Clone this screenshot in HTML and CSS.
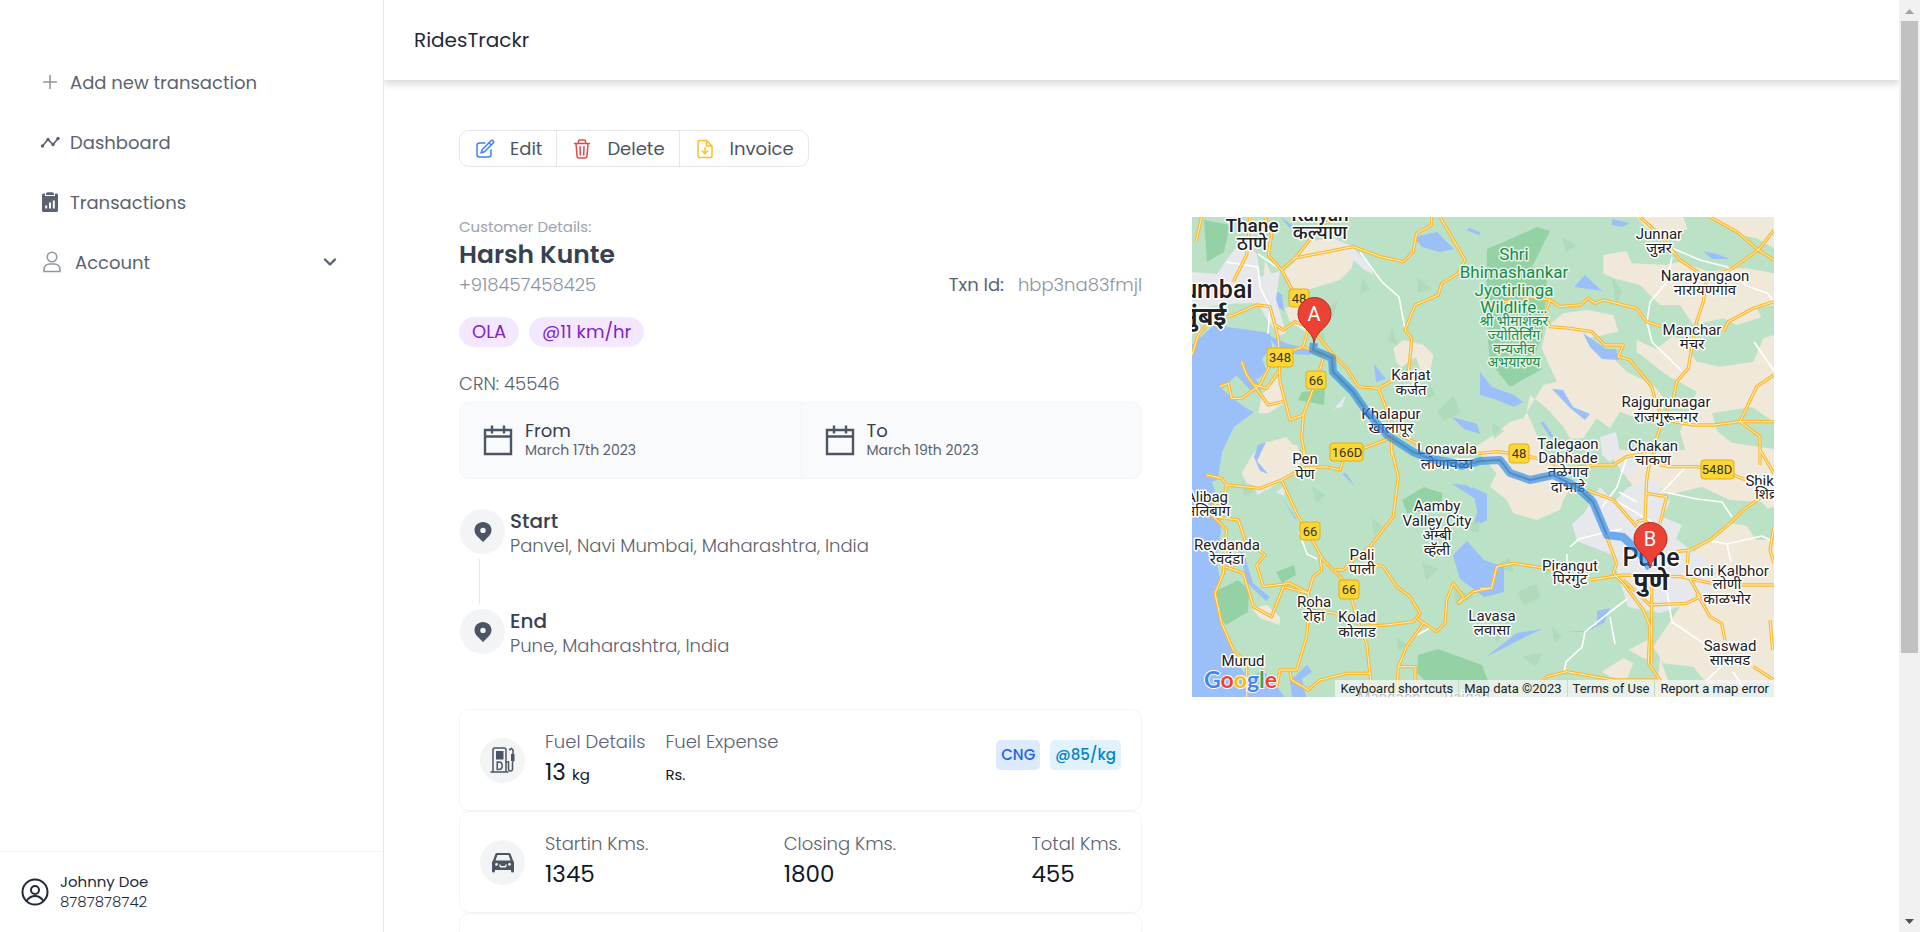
FILE: index.html
```html
<!DOCTYPE html>
<html lang="en">
<head>
<meta charset="utf-8">
<title>RidesTrackr</title>
<link rel="stylesheet" href="styles.css">
</head>
<body>
<div class="app">
  <aside class="sidebar">
    <nav class="nav">
      <a class="nav-item" href="#add"><svg class="nav-icon" viewBox="0 0 20 20"><path class="thin" d="M10 3v14M3 10h14"/></svg>Add new transaction</a>
      <a class="nav-item" href="#dashboard"><svg class="nav-icon" viewBox="0 0 20 20"><path d="M2.500 14 8 7.500l5 5 5-6" fill="none" stroke="currentColor" stroke-width="1.600"/><g fill="currentColor"><circle cx="2.500" cy="14" r="1.700"/><circle cx="8" cy="7.500" r="1.700"/><circle cx="13" cy="12.500" r="1.700"/><circle cx="18" cy="6.500" r="1.700"/></g></svg>Dashboard</a>
      <a class="nav-item" href="#transactions"><svg class="nav-icon" viewBox="0 0 20 20"><path fill="currentColor" d="M3.500 1.500H5V4h10V1.500h1.500q1.500 0 1.500 1.500v15.500q0 1.500-1.500 1.500h-13Q2 20 2 18.500V3q0-1.500 1.500-1.500zM6 2q0-1.800 1.800-1.800h4.400Q14 .2 14 2v1H6z"/><path d="M6.200 16.500v-3M10 16.500v-6M13.800 16.500v-8" fill="none" stroke="#fff" stroke-width="2"/></svg>Transactions</a>
      <button class="nav-item nav-account" type="button"><svg class="nav-icon account-icon" viewBox="0 0 20 24"><circle class="thin" cx="10" cy="7" r="4.700"/><path class="thin" d="M2 21.500v-1.700Q2 14 8 14h4q6 0 6 5.800v1.700z"/></svg>Account<svg class="chevron" viewBox="0 0 14 14"><path d="m2 4.500 5 5 5-5" fill="none" stroke="currentColor" stroke-width="2.400" stroke-linecap="round" stroke-linejoin="round"/></svg></button>
    </nav>
    <div class="user">
      <svg class="avatar" viewBox="0 0 28 28" fill="none" stroke="currentColor" stroke-width="2"><circle cx="14" cy="14" r="12.500"/><circle cx="14" cy="12" r="4"/><path d="M5.500 23q3.500-5 8.500-5t8.500 5"/></svg>
      <div><div class="user-name">Johnny Doe</div><div class="user-phone">8787878742</div></div>
    </div>
  </aside>

  <div class="page">
    <header class="topbar">RidesTrackr</header>
    <main class="content">
      <div class="actions">
        <button type="button"><svg class="blue" viewBox="0 0 20 20"><path d="M10 4H4.500Q2 4 2 6.500v9Q2 18 4.500 18h9q2.500 0 2.500-2.500V11M16 1.800q1-1 2.100.1t.1 2.100L9.500 12.700 6 14l1.300-3.500zM14 3.800 16.200 6"/></svg>Edit</button>
        <button type="button"><svg class="red" viewBox="0 0 20 20"><path d="M2.500 4.500h15M6.500 4.500V2.300Q6.500 1 8 1h4q1.500 0 1.500 1.300v2.200M4 4.500l1 12.500q.2 2 2 2h6q1.800 0 2-2l1-12.500M8 7.500l.3 8.500M12 7.500l-.3 8.500"/></svg>Delete</button>
        <button type="button"><svg class="amber" viewBox="0 0 20 20"><path d="M11.500 1.500H5Q3 1.500 3 3.500v13q0 2 2 2h10q2 0 2-2V7l-5.500-5.500V7H17M10 8.500v6M7.300 12l2.700 2.700 2.700-2.700"/></svg>Invoice</button>
      </div>

      <div class="columns">
        <section class="details">
          <p class="eyebrow">Customer Details:</p>
          <h1>Harsh Kunte</h1>
          <div class="contact"><span>+918457458425</span><span class="txn"><b>Txn Id:</b>hbp3na83fmjl</span></div>
          <div class="chips"><span>OLA</span><span>@11 km/hr</span></div>
          <p class="crn">CRN: 45546</p>
          <div class="dates">
            <div class="date"><svg viewBox="0 0 30 32"><path d="M2 6h26v24H2zM2 12.500h26M9 1.500v8M21 1.500v8"/></svg><div><div class="date-title">From</div><div class="date-value">March 17th 2023</div></div></div>
            <div class="date"><svg viewBox="0 0 30 32"><path d="M2 6h26v24H2zM2 12.500h26M9 1.500v8M21 1.500v8"/></svg><div><div class="date-title">To</div><div class="date-value">March 19th 2023</div></div></div>
          </div>

          <div class="trip">
            <div class="stop"><span class="round"><svg class="pin" viewBox="0 0 20 22"><path fill-rule="evenodd" d="M10 1C5.200 1 1.500 4.600 1.500 9.200c0 3 1.800 5.200 4 7.300L10 21l4.500-4.500c2.200-2.100 4-4.300 4-7.300C18.500 4.600 14.800 1 10 1zm0 5.700a2.700 2.700 0 1 1 0 5.400 2.700 2.700 0 0 1 0-5.400z"/></svg></span><div><h2>Start</h2><p>Panvel, Navi Mumbai, Maharashtra, India</p></div></div>
            <div class="connector"></div>
            <div class="stop"><span class="round"><svg class="pin" viewBox="0 0 20 22"><path fill-rule="evenodd" d="M10 1C5.200 1 1.500 4.600 1.500 9.200c0 3 1.800 5.200 4 7.300L10 21l4.500-4.500c2.200-2.100 4-4.300 4-7.300C18.500 4.600 14.800 1 10 1zm0 5.700a2.700 2.700 0 1 1 0 5.400 2.700 2.700 0 0 1 0-5.400z"/></svg></span><div><h2>End</h2><p>Pune, Maharashtra, India</p></div></div>
          </div>

          <div class="card">
            <span class="round"><svg class="pump" viewBox="0 0 28 28"><path d="M4 26V4q0-2 2-2h9q2 0 2 2v22M1.500 26h18M20 4l2.500-1.500L24 4v12M17 16h2.500v7q0 2 2 2t2-2v-7" fill="none" stroke="currentColor" stroke-width="1.500"/><path d="M7 5h7.500v8.500H7zM22 8h3.500v7H22z" fill="currentColor"/><path d="M8.200 16v7.500h1.600q3.400 0 3.400-3.800T9.800 16z" fill="none" stroke="currentColor" stroke-width="1.500"/></svg></span>
            <div class="metric"><span>Fuel Details</span><strong>13 <small>kg</small></strong></div>
            <div class="metric"><span>Fuel Expense</span><strong><small>Rs.</small></strong></div>
            <div class="tags"><span class="tag-blue">CNG</span><span class="tag-sky">@85/kg</span></div>
          </div>
          <div class="card">
            <span class="round"><svg class="car" viewBox="0 0 24 24"><path fill="currentColor" fill-rule="evenodd" d="M6 3h12q1.300 0 1.700 1.200L22 10.500l1 1.500v9q0 1.500-1.500 1.500T20 21v-1H4v1q0 1.500-1.500 1.500T1 21v-9l1-1.500 2.300-6.300Q4.700 3 6 3zm.5 2L4.500 10.500h15L17.500 5zM5.500 13a1.400 1.400 0 1 0 0 2.800 1.400 1.400 0 0 0 0-2.800zm13 0a1.400 1.400 0 1 0 0 2.800 1.400 1.400 0 0 0 0-2.800zM8 14.500l1 3h6l1-3h-1.500L14 16h-4l-.5-1.500z"/></svg></span>
            <div class="readings">
              <div class="metric"><span>Startin Kms.</span><strong>1345</strong></div>
              <div class="metric"><span>Closing Kms.</span><strong>1800</strong></div>
              <div class="metric"><span>Total Kms.</span><strong>455</strong></div>
            </div>
          </div>
          <div class="card"></div>
        </section>

        <section class="map" aria-label="Route map">
          <svg class="map-art" viewBox="0 0 582 480" preserveAspectRatio="xMidYMid slice">
            <defs>
              <g id="roads" fill="none" stroke-linejoin="round">
                <g transform="translate(-12 -12) scale(.33333)"><path d="M65 36 48 110M210 36 200 150 160 230M255 36 275 90 265 150 305 195 345 270 395 370 460 450 500 490 535 545 595 550 640 525 685 500 690 460 695 400 675 375 705 300 775 270 785 235 835 205 855 165 780 36M36 450 55 390 90 350 160 330 230 300 270 305 285 360 310 375 345 350 385 365M285 360 295 400 300 530 330 645 370 630M305 195 345 160 385 110 420 60 460 45M340 160 520 125 600 155 670 170 700 140 710 85 755 60 755 36M430 460 415 510 370 630 365 700 375 750M120 545 145 535 155 580 185 580 240 540 270 480M185 470 200 510 265 600 310 590M225 540 260 550 295 500M595 550 615 600 635 690 635 750M300 450 370 425 430 450M370 425 385 370M660 690 720 720M550 730 630 700"/></g>
                <g transform="translate(288 -12) scale(.33333)"><path d="M480 36 540 90 600 165 660 205M690 36 770 80 835 135 882 165M882 75 835 135 750 195 680 215 670 290 650 350 640 400 625 490 590 530 580 580 550 640 530 700 520 760M40 290 130 290 150 275 210 285 240 305 300 300 325 280 345 295 370 285 470 310 500 350 545 365M210 285 195 330 210 365 270 370 335 380 375 420 430 420 415 455 450 465 515 545 530 600 550 640M882 290 820 310 745 350 730 380M555 645 640 660 700 660 780 650 882 650M780 650 830 545 882 510M780 650 840 695 840 780"/></g>
                <g transform="translate(-12 233) scale(.33333)"><path d="M80 75 125 85 140 105 240 115 305 90 370 55 435 50 480 60 490 30M370 0 370 50M305 90 350 190 390 260 430 330 490 390 510 430 535 520 560 580 575 720M140 105 130 150 75 180 100 200 175 210 195 270 255 315 230 345 250 410 330 400 385 430M100 200 140 240 130 370 105 430 125 520 160 600 200 640 200 740M135 350 190 370 220 470 275 500 310 410 385 430 400 380 425 360 420 320M635 0 655 80 640 200 570 290 520 330 490 360 465 360M560 340 610 350 650 410 690 440 720 490 700 515 620 525 540 530M385 430 390 480 470 490M385 500 380 560 350 660 300 660 290 710M330 665 335 690 385 720 420 690 500 670 570 670M710 505 770 545 795 520 800 450 820 400 850 440 835 460 880 425 930 415M730 520 680 590 655 650 650 740M655 650 705 650 705 700"/></g>
                <g transform="translate(288 233) scale(.33333)"><path d="M-120 5 0 10 50 5 130 15 190 30 260 55 350 45 400 45 440 20 500 10M490 35 570 50 650 50 760 75 810 95 850 95M515 0 500 90 495 210M320 120 400 150 470 230M500 130 560 140 540 220M380 260 410 340 400 370 430 400 490 480 510 530 505 640 540 690 540 740M0 415 35 415 50 350 100 340 230 360M330 390 430 375 600 380 720 405 882 405M590 305 630 300 690 270 750 220 790 180 860 130M625 300 620 370 660 440 620 460 510 465 430 390M515 390 515 640M650 430 690 500 725 520 735 570M820 650 882 690M882 230 870 300 882 340M870 510 878 600M180 700 200 680 260 665 400 690 540 690M840 0 882 70M470 215 490 210 520 230"/></g>
              </g>
            </defs>
            <rect width="582" height="480" fill="#bbe2c6"/>
            <g class="beige">
              <g transform="translate(-12 -12) scale(.33333)"><path d="M345 170 380 110 460 100 530 130 515 190 480 225 400 250 340 260 310 200zM640 430 670 405 730 420 760 450 750 500 700 515 650 475zM245 570 300 510 320 590 265 625 235 625zM315 310 350 300 400 350 430 380 400 395 330 350zM240 750 270 710 320 695 360 750zM255 165 275 210 265 280 250 230z"/></g>
              <g transform="translate(288 -12) scale(.33333)"><path d="M470 36H610L625 80 595 110 500 70zM690 36H882V130L830 100 780 90zM370 150 440 138 455 175 560 180 600 170 690 200 760 190 800 190 882 205V300L830 310 850 350 790 370 730 340 640 360 600 300 540 300 480 240 400 220 370 205zM200 365 250 325 320 315 400 330 415 380 370 390 320 400 390 450 440 500 520 540 560 590 530 650 500 650 420 620 390 670 350 640 310 700 270 700 250 665 200 610 150 570 140 620 175 700 200 750H-50L40 690 90 650 130 640 190 540 230 530 185 430zM500 370 600 400 650 470 720 485 820 470 850 400 882 390V750H620L600 680 650 560 560 510 470 440 470 405z"/></g>
              <g transform="translate(-12 233) scale(.33333)"><path d="M185 70 220 10 260-25 350-15 370 30 310 90 260 120 200 100zM215 475 260 465 300 500 300 525 240 505z"/></g>
              <g transform="translate(288 233) scale(.33333)"><path d="M-20-10 80-25 190-10 220 50 280 100 250 150 240 180 170 210 100 190 80 150 30 110 50 70zM380 0H882V170L780 200 830 270 882 270V700L680 700 640 650 550 640 520 590 560 530 600 470 540 420 610 330 700 260 760 200 650 150 570 130 510 100 460 110zM365 665 430 625 460 640 440 690 390 680zM445 600 520 560 500 630zM540 620 580 740H530z"/></g>
            </g>
            <g class="meadow">
              <path d="M425 95 468 92 490 112 464 132 430 116zM520 196 560 190 582 205V232L540 226 525 214zM467 280 510 270 538 283 570 285 582 300V313L530 305 490 295zM480 15 510 10 565 28 545 40 500 34zM545 108 576 98 570 116 550 122z"/>
            </g>
            <g class="park">
              <path d="M12 3 38 8 32 35 15 45zM295 32 323 20 345 10 358 14 350 30 340 50 355 62 353 90 350 120 342 140 350 152 318 170 298 145 294 100zM110 175 133 172 132 188 106 183zM24 374 46 363 57 373 56 395 34 408 24 395zM84 355 102 348 104 358 90 366zM210 283 232 270 250 276 250 292 215 296zM226 438 246 432 290 448 302 480H250L225 456z"/>
            </g>
            <g class="relief">
              <path d="M135 90 146 84 141 100zM170 60 178 72 168 78zM120 115 130 108 134 124zM200 110 206 128 196 124zM210 150 224 140 228 152 214 160zM245 195 262 178 268 196 252 204zM236 165 244 178 234 182zM300 205 312 214 302 222zM225 60 240 72 226 76zM420 60 430 74 424 88zM270 310 290 300 286 316zM230 345 246 352 234 364zM262 370 282 380 264 388zM302 350 318 340 322 356zM325 375 345 366 348 380 332 388zM352 340 366 350 354 358zM180 300 190 310 182 318zM205 420 216 428 206 434zM300 410 312 416 304 426zM330 440 350 436 344 450zM360 410 370 420 362 426zM50 265 62 274 52 280zM120 270 134 278 124 286zM370 20 384 28 374 36z"/>
            </g>
            <g class="sea">
              <path d="M0 128 22 108 50 112 78 116 80 130 70 142 75 154 66 162 48 155 30 172 52 190 62 195 42 210 30 235 26 262 20 265 28 290 29 315 24 340 28 363 22 375 28 400 39 425 44 445 58 463 70 452 93 480H0z"/>
              <path d="M62 128 50 140 70 172 60 175 42 156zM64 60 90 78 92 94 77 85zM76 118 96 127 120 132 118 138 88 136zM88 0 103 10 120 12 104 18zM222 20 245 15 262 32 248 35 230 30zM182 147 194 162 184 165zM260 200 285 207 288 217 272 212zM260 267 274 268 294 280V302L282 306 288 285zM261 338 275 324 292 343 312 350V375L292 380 268 362zM382 70 393 58 399 64 410 74 390 71zM420 2 438 6 430 10 420 8zM511 34 525 37 538 42 520 42zM391 116 414 132 424 132 427 143 410 142 398 130zM360 172 371 173 381 190 398 197 393 203 378 191zM288 155 300 170 322 178 331 185 322 190 302 182 288 178zM280 270 295 277V303L288 307zM45 325 53 340 61 366 78 380 74 384 55 366zM90 280 105 303 102 301zM294 440 325 416 350 412 327 423 310 432zM374 414 390 415 405 408 405 394 418 391 412 406 396 414zM98 464 115 448 120 455 110 462 114 480H100zM62 240 66 228 74 225 65 244 76 257 68 254zM154 256 163 269 150 257z"/>
              <path d="M230 20 248 30M276 12 288 17M350 205 360 220" fill="none" stroke="#9bbff9" stroke-width="3"/>
            </g>
            <g class="urban">
              <path d="M0 55 25 57 38 38 50 24 65 37 68 60 88 54 84 82 94 116 87 119 74 101 66 86 30 87 0 94zM135 17 165 35 177 48 182 58 171 52zM392 296 408 270 422 285 435 271 460 260 478 285 470 300 490 308 484 322 512 342 520 378 468 396 436 390 428 364 420 338 385 324 380 307zM408 220 424 215 428 235 418 245 410 238zM430 238 448 242 440 262 428 254zM84 275 94 268 92 279zM62 271 75 272 66 278zM142 192 154 178 150 190z"/>
            </g>
            <g class="minor">
              <path d="M34 45 66 50 68 70 78 90 76 117M66 37 88 52M168 35 190 65 207 80 213 112M480 31 508 43 535 50 555 69 575 76 582 85M480 40 475 65 458 85 455 105 460 125 490 154M562 125 582 154M107 315 115 337 125 342M378 330 387 322 415 315 430 312M375 337 375 350M435 240 425 270 410 290M426 285 460 305M427 275 445 285M470 275 493 251M472 275 505 282 530 285 540 300M518 324 535 327 570 319 582 325M535 327 539 345M475 375 480 405 510 425 530 445M435 382 418 395 393 415 390 430 374 445 372 455M418 400 423 427M240 410 225 418M535 444 515 463M541 455 555 475"/>
            </g>
            <use href="#roads" class="road-case"/>
            <use href="#roads" class="road-core"/>

            <g class="shields">
              <rect x="97" y="72" width="20" height="18" rx="3"/><rect x="75" y="131" width="26" height="19" rx="3"/><rect x="114" y="154" width="20" height="18" rx="3"/><rect x="138" y="226" width="33" height="18" rx="3"/><rect x="108" y="305" width="20" height="18" rx="3"/><rect x="147" y="363" width="20" height="19" rx="3"/><rect x="317" y="227" width="20" height="19" rx="3"/><rect x="509" y="243" width="33" height="19" rx="3"/>
            </g>
            <g class="shield-text">
              <text x="107" y="86">48</text><text x="88" y="145">348</text><text x="124" y="168">66</text><text x="155" y="240">166D</text><text x="118" y="319">66</text><text x="157" y="377">66</text><text x="327" y="241">48</text><text x="525" y="257">548D</text>
            </g>
            <g class="place">
              <text x="219" y="163">Karjat</text><text x="219" y="178">कर्जत</text>
              <text x="199" y="202">Khalapur</text><text x="199" y="216">खालापूर</text>
              <text x="255" y="237">Lonavala</text><text x="255" y="252">लोणावळा</text>
              <text x="113" y="247">Pen</text><text x="113" y="262">पेण</text>
              <text x="15" y="285">Alibag</text><text x="15" y="299">अलिबाग</text>
              <text x="35" y="333">Revdanda</text><text x="35" y="347">रेवदंडा</text>
              <text x="170" y="343">Pali</text><text x="170" y="357">पाली</text>
              <text x="245" y="294">Aamby</text><text x="245" y="309">Valley City</text><text x="245" y="323">अ‍ॅम्बी</text><text x="245" y="338">व्हॅली</text>
              <text x="122" y="390">Roha</text><text x="122" y="404">रोहा</text>
              <text x="165" y="405">Kolad</text><text x="165" y="420">कोलाड</text>
              <text x="51" y="449">Murud</text>
              <text x="300" y="404">Lavasa</text><text x="300" y="418">लवासा</text>
              <text x="467" y="22">Junnar</text><text x="467" y="36">जुन्नर</text>
              <text x="513" y="64">Narayangaon</text><text x="513" y="78">नारायणगांव</text>
              <text x="500" y="118">Manchar</text><text x="500" y="132">मंचर</text>
              <text x="474" y="190">Rajgurunagar</text><text x="474" y="205">राजगुरूनगर</text>
              <text x="376" y="232">Talegaon</text><text x="376" y="246">Dabhade</text><text x="376" y="260">तळेगाव</text><text x="376" y="275">दाभाडे</text>
              <text x="461" y="234">Chakan</text><text x="461" y="248">चाकण</text>
              <text x="585" y="269">Shikrapur</text><text x="585" y="282">शिक्रापूर</text>
              <text x="378" y="354">Pirangut</text><text x="378" y="367">पिरंगुट</text>
              <text x="535" y="359">Loni Kalbhor</text><text x="535" y="372">लोणी</text><text x="535" y="387">काळभोर</text>
              <text x="538" y="434">Saswad</text><text x="538" y="448">सासवड</text>
              <text x="197" y="485">Mangaon</text><text x="275" y="485">Raigad</text>
            </g>
            <g class="place reserve">
              <text x="322" y="43">Shri</text><text x="322" y="61">Bhimashankar</text><text x="322" y="79">Jyotirlinga</text><text x="322" y="96">Wildlife…</text>
              <g class="reserve-local"><text x="322" y="109">श्री भीमाशंकर</text><text x="322" y="123">ज्योतिर्लिंग</text><text x="322" y="137">वन्यजीव</text><text x="322" y="150">अभयारण्य</text></g>
            </g>
            <g class="place town">
              <text x="60" y="15">Thane</text><text x="60" y="33">ठाणे</text><text x="128" y="4">Kalyan</text><text x="128" y="22">कल्याण</text>
            </g>
            <g class="place city">
              <text x="15" y="81">Mumbai</text><text class="local" x="12" y="108">मुंबई</text><text x="459" y="349">Pune</text><text class="local" x="459" y="373">पुणे</text>
            </g>

            <path class="route" d="M122 126 121 133 140 141 141 155 161 175 175 195 195 218 221 235 239 242 262 246 270 249 288 244 308 243 318 256 338 263 361 258 385 270 401 285 415 318 431 320 448 336 458 351"/>
            <path class="route-core" d="M122 126 121 133 140 141 141 155 161 175 175 195 195 218 221 235 239 242 262 246 270 249 288 244 308 243 318 256 338 263 361 258 385 270 401 285 415 318"/>
            <g class="marker"><path d="M122 126C121 113 106 110 106 97a16 16 0 0 1 33 0C139 110 124 113 122 126z"/><path d="M458 351C457 338 442 335 442 322a16 16 0 0 1 33 0C475 335 460 338 458 351z"/></g>
            <g class="marker-text"><text x="122" y="104">A</text><text x="458" y="329">B</text></g>
            <text class="google" x="12" y="471"><tspan fill="#4285f4">G</tspan><tspan fill="#ea4335">o</tspan><tspan fill="#fbbc04">o</tspan><tspan fill="#4285f4">g</tspan><tspan fill="#34a853">l</tspan><tspan fill="#ea4335">e</tspan></text>
          </svg>
          <div class="attribution"><button type="button">Keyboard shortcuts</button><span>Map data ©2023</span><a href="#terms">Terms of Use</a><a href="#report">Report a map error</a></div>
        </section>
      </div>
    </main>
  </div>

  <div class="scrollbar" aria-hidden="true">
    <svg viewBox="0 0 21 20"><path fill="#a3a3a3" d="M6 14h9l-4.500-5z"/></svg>
    <div class="track"><div class="thumb"></div></div>
    <svg viewBox="0 0 21 20"><path fill="#505050" d="M6 7h9l-4.500 5z"/></svg>
  </div>
</div>
</body>
</html>
```
FILE: styles.css
```css
* { box-sizing: border-box; }
body { margin: 0; background: #fff; color: #5b6270; font: 300 18px/25px Poppins, Inter, "Noto Sans", sans-serif; }
h1, h2, p { margin: 0; }
button { font: inherit; color: inherit; background: none; border: 0; padding: 0; cursor: pointer; }
a { color: inherit; text-decoration: none; }
.app { display: flex; height: 100vh; overflow: hidden; }

.sidebar { width: 20%; flex: none; display: flex; flex-direction: column; justify-content: space-between; border-right: 1px solid #e5e7eb; }
.nav { display: flex; flex-direction: column; gap: 10px; padding: 57px 40px 0; }
.nav-item { display: flex; align-items: center; gap: 10px; height: 50px; font-weight: 400; text-align: left; }
.nav-icon { width: 20px; height: 20px; }
.account-icon { width: 24px; height: 24px; }
.nav-account { gap: 11px; }
.thin { fill: none; stroke: #9096a3; stroke-width: 1.6; }
.chevron { width: 14px; height: 14px; margin-left: auto; margin-right: 6px; }
.user { display: flex; align-items: center; gap: 11px; height: 81px; padding-left: 21px; border-top: 1px solid #f3f4f6; color: #1f2937; font-size: 15px; line-height: 20px; }
.avatar { width: 28px; height: 28px; }
.user-name { font-weight: 400; }

.page { flex: 1; min-width: 0; overflow: hidden; }
.topbar { display: flex; align-items: center; height: 80px; padding-left: 30px; color: #1f2937; font-size: 20px; font-weight: 400; box-shadow: 0 4px 8px rgba(0, 0, 0, .16); }
.content { padding: 50px 125px 0 75px; }
.actions { display: flex; width: fit-content; border: 1px solid #e5e7eb; border-radius: 10px; color: #4b5563; }
.actions button { display: flex; align-items: center; gap: 15px; height: 35px; padding: 0 14px 0 15px; font-weight: 400; }
.actions button + button { border-left: 1px solid #e5e7eb; }
.actions svg { width: 20px; height: 20px; fill: none; stroke: currentColor; stroke-width: 1.5; stroke-linejoin: round; stroke-linecap: round; }
.actions .blue { color: #3b82f6; }
.actions .red { color: #ef4444; }
.actions .amber { color: #fbbf24; }

.columns { display: grid; grid-template-columns: 683fr 582fr; gap: 50px; align-items: start; margin-top: 50px; }
.eyebrow { color: #9ca3af; font-size: 15px; line-height: 20px; font-weight: 400; }
h1 { color: #374151; font-size: 25px; line-height: 36px; font-weight: 600; }
.contact { display: flex; justify-content: space-between; color: #8b93a1; line-height: 24px; }
.txn { display: flex; gap: 14px; }
.txn b { color: #5b6270; font-weight: 400; }
.chips { display: flex; gap: 10px; margin-top: 20px; }
.chips span { padding: 0 13px; border-radius: 15px; background: #f3e8ff; color: #7e22ce; line-height: 30px; font-weight: 400; }
.crn { margin-top: 24px; line-height: 25px; }
.dates { display: grid; grid-template-columns: 1fr 1fr; margin-top: 6px; border: 1px solid #f3f4f6; border-radius: 10px; background: #f9fafb; }
.date { display: flex; align-items: center; gap: 12px; height: 75px; padding: 0 0 2px 23px; }
.date + .date { border-left: 1px solid #f3f4f6; }
.date svg { width: 30px; height: 32px; fill: none; stroke: #4b5563; stroke-width: 2.4; }
.date-title { color: #374151; line-height: 20px; font-weight: 400; }
.date-value { font-size: 14px; line-height: 18px; font-weight: 400; }

.round { display: flex; flex: none; align-items: center; justify-content: center; width: 45px; height: 45px; border-radius: 50%; background: #f3f4f6; color: #4b5563; }
.pin { width: 20px; height: 22px; fill: currentColor; }
.trip { padding: 30px 0 55px 1px; }
.stop { display: flex; gap: 5px; height: 45px; }
h2 { color: #374151; font-size: 20px; line-height: 24px; font-weight: 500; }
.connector { width: 1px; height: 45px; margin: 5px 19px; background: #e5e7eb; }

.card { display: flex; align-items: center; height: 102px; padding: 0 20px; border: 1px solid #f3f4f6; border-radius: 10px; }
.pump { width: 28px; height: 28px; }
.car { width: 24px; height: 24px; }
.metric { display: flex; flex-direction: column; margin: 0 0 3px 20px; }
.metric span { line-height: 30px; }
.metric strong { color: #111827; font-size: 23px; line-height: 30px; font-weight: 400; }
.metric small { font-size: 15px; }
.readings { display: flex; flex: 1; justify-content: space-between; margin-bottom: 3px; }
.tags { display: flex; gap: 10px; margin: 0 0 10px auto; font-size: 15px; line-height: 30px; font-weight: 500; }
.tags span { padding: 0 5px; border-radius: 5px; }
.tag-blue { background: #dbeafe; color: #2563eb; }
.tag-sky { background: #e0f2fe; color: #0284c7; }

.map { position: relative; height: 480px; overflow: hidden; font-family: Roboto, "Noto Sans", "Noto Sans Devanagari", sans-serif; font-weight: 400; }
.map-art { display: block; width: 100%; height: 100%; }
.beige { fill: #f0e9d9; }
.meadow { fill: #bbe2c6; }
.park { fill: #94d2a5; }
.relief { fill: #a9d9b8; opacity: .7; }
.sea { fill: #9bbff9; }
.urban { fill: #e7e8ec; }
.minor { fill: none; stroke: #fff; stroke-width: 1.6; }
.road-case { stroke: #fab933; stroke-width: 10; }
.road-core { stroke: #fff0bd; stroke-width: 3; }
.shields { fill: #fdd835; stroke: #e2ad1c; }
.shield-text { font-size: 13px; text-anchor: middle; fill: #333; }
.place { font-size: 15px; text-anchor: middle; fill: #202124; stroke: #fff; stroke-width: 3; stroke-linejoin: round; paint-order: stroke; }
.place.reserve { font-size: 17px; fill: #188a48; stroke: #e5f5e9; }
.place .reserve-local { font-size: 14px; }
.place.town { font-size: 19px; font-weight: 500; }
.place.city { font-size: 25px; font-weight: 500; }
.city .local { font-weight: 700; }
.route { fill: none; stroke: #1a80f0; stroke-opacity: .6; stroke-width: 8; stroke-linejoin: round; }
.route-core { fill: none; stroke: #4c7fa8; stroke-opacity: .7; stroke-width: 2; stroke-linejoin: round; }
.marker { fill: #ea4335; stroke: #b52b20; }
.marker-text { fill: #fff; font-size: 20px; text-anchor: middle; }
.google { font-family: Lato, sans-serif; font-size: 23px; font-weight: 700; stroke: #fff; stroke-width: 2; paint-order: stroke; }
.attribution { position: absolute; right: 0; bottom: 0; display: flex; height: 17px; background: rgba(245, 245, 245, .75); color: #202124; font-size: 13px; line-height: 17px; }
.attribution > * { padding: 0 5px; white-space: nowrap; }
.attribution > * + * { border-left: 1px solid #c5dccb; }

.scrollbar { display: flex; flex-direction: column; width: 21px; flex: none; background: #f1f1f1; }
.scrollbar svg { width: 21px; height: 20px; }
.track { flex: 1; padding: 1px 2px; }
.thumb { height: 71%; background: #c1c1c1; }
```
